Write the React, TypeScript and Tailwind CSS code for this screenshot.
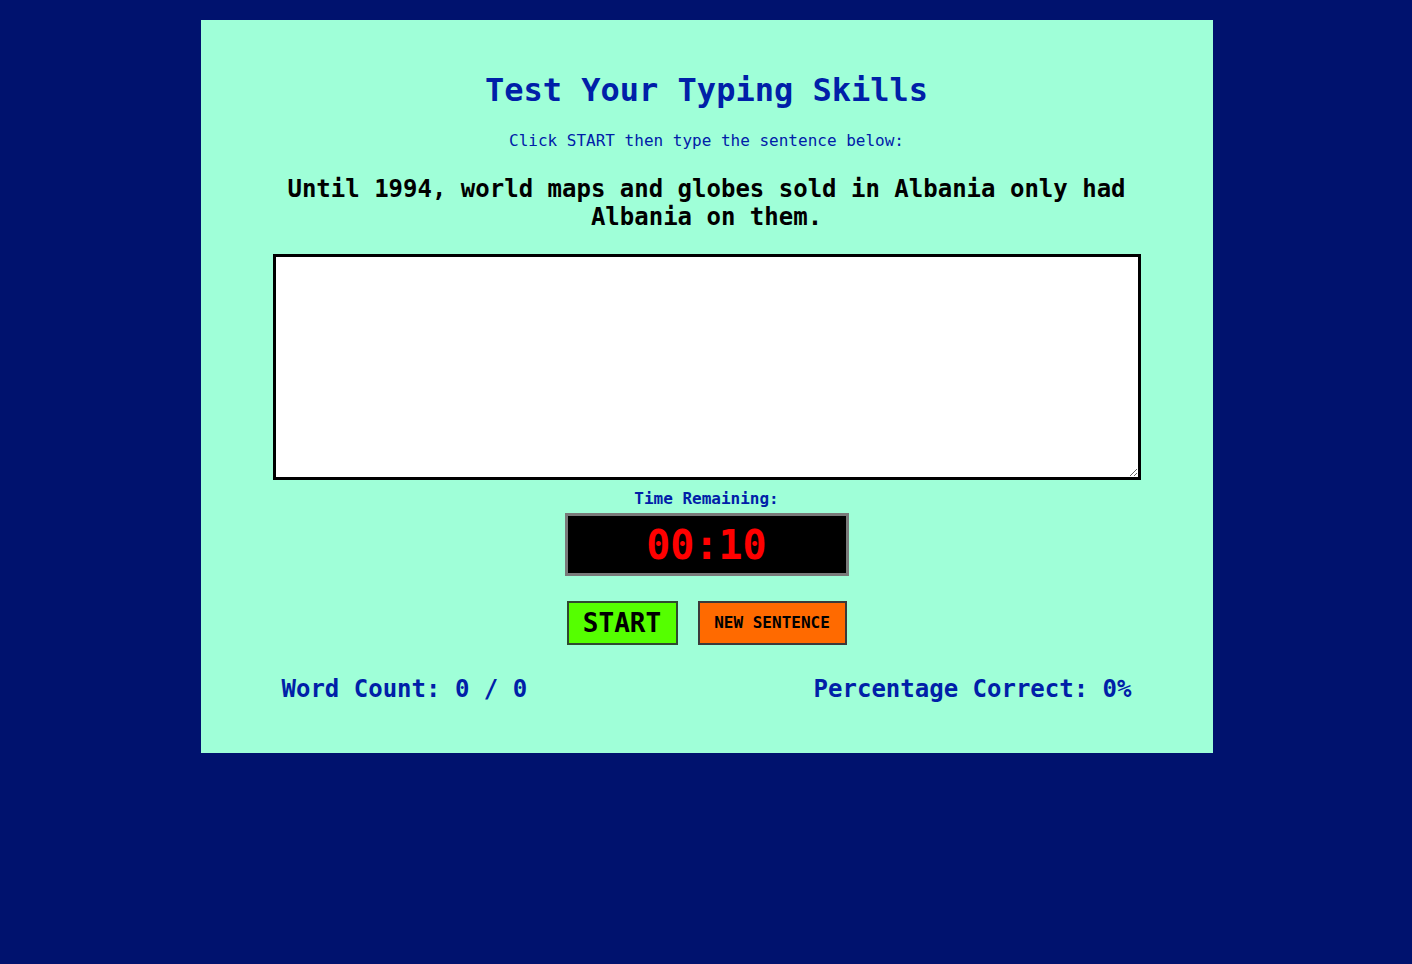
import { useState } from "react";

const App = () => {
    const [text, setText] = useState("")

    return (
        <div className="min-h-screen w-full bg-[#00126e] pt-5 pl-px" style={{ fontFamily: '"DejaVu Sans Mono", monospace' }}>
            <div className="mx-auto w-[1012px] bg-[#9fffd8] pt-[50px] pb-[50px] flex flex-col items-center">
                <h1 className="text-[32px] leading-[40px] font-bold text-[#0020a8]">Test Your Typing Skills</h1>
                <p className="mt-[21px] text-[16px] leading-[20px] text-[#0020a8]">Click START then type the sentence below:</p>
                <p className="mt-6 w-[868px] text-center text-[24px] leading-[28px] font-bold text-black">
                    Until 1994, world maps and globes sold in Albania only had Albania on them.
                </p>
                <textarea
                    value={text}
                    onChange={(e) => setText(e.target.value)}
                    className="mt-[23px] block w-[868px] h-[226px] border-[3px] border-black bg-white outline-none p-1"
                />
                <div className="mt-[9px] text-[16px] leading-[20px] font-bold text-[#0020a8]">Time Remaining:</div>
                <div className="mt-[4px] w-[284px] h-[63px] border-[3px] border-[#7a7a7a] bg-black flex items-center justify-center">
                    <span className="text-[40px] leading-none font-bold text-[#ff0000]">00:10</span>
                </div>
                <div className="mt-[25px] flex gap-5">
                    <button className="w-[111px] h-[44px] border-2 border-[#2f4a2f] bg-[#55ff00] text-[26px] font-bold text-black flex items-center justify-center">START</button>
                    <button className="w-[149px] h-[44px] border-2 border-[#3a3a3a] bg-[#ff6a00] text-[16px] font-bold text-black flex items-center justify-center">NEW SENTENCE</button>
                </div>
                <div className="mt-[30px] w-[868px] px-[9px] flex justify-between text-[24px] leading-[28px] font-bold text-[#0020a8]">
                    <span>Word Count: 0 / 0</span>
                    <span>Percentage Correct: 0%</span>
                </div>
            </div>
        </div>
    );
}

export default App;
